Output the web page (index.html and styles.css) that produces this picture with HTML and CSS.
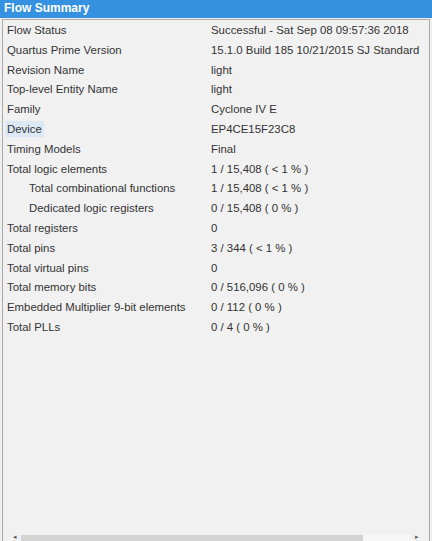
FILE: index.html
```html
<!DOCTYPE html>
<html lang="en">
  <head>
    <meta charset="UTF-8" />
    <title>Flow Summary</title>
    <link rel="stylesheet" href="styles.css">
  </head>
  <body>
    <div class="title">Flow Summary</div>
    <div class="panel">
      <div class="rows">
        <div class="row"><span class="lbl">Flow Status</span><span>Successful - Sat Sep 08 09:57:36 2018</span></div>
        <div class="row"><span class="lbl">Quartus Prime Version</span><span>15.1.0 Build 185 10/21/2015 SJ Standard</span></div>
        <div class="row"><span class="lbl">Revision Name</span><span>light</span></div>
        <div class="row"><span class="lbl">Top-level Entity Name</span><span>light</span></div>
        <div class="row"><span class="lbl">Family</span><span>Cyclone IV E</span></div>
        <div class="row"><span class="lbl"><span class="sel">Device</span></span><span>EP4CE15F23C8</span></div>
        <div class="row"><span class="lbl">Timing Models</span><span>Final</span></div>
        <div class="row"><span class="lbl">Total logic elements</span><span>1 / 15,408 ( &lt; 1 % )</span></div>
        <div class="row"><span class="lbl sub">Total combinational functions</span><span>1 / 15,408 ( &lt; 1 % )</span></div>
        <div class="row"><span class="lbl sub">Dedicated logic registers</span><span>0 / 15,408 ( 0 % )</span></div>
        <div class="row"><span class="lbl">Total registers</span><span>0</span></div>
        <div class="row"><span class="lbl">Total pins</span><span>3 / 344 ( &lt; 1 % )</span></div>
        <div class="row"><span class="lbl">Total virtual pins</span><span>0</span></div>
        <div class="row"><span class="lbl">Total memory bits</span><span>0 / 516,096 ( 0 % )</span></div>
        <div class="row"><span class="lbl">Embedded Multiplier 9-bit elements</span><span>0 / 112 ( 0 % )</span></div>
        <div class="row"><span class="lbl">Total PLLs</span><span>0 / 4 ( 0 % )</span></div>
      </div>
      <div class="hscroll">
        <span class="arrow">&#9666;</span>
        <div class="track"><div class="thumb"></div></div>
        <span class="arrow">&#9656;</span>
      </div>
    </div>
  </body>
</html>
```

FILE: styles.css
```css
html, body {
  margin: 0;
  height: 100%;
}
body {
  width: 432px;
  height: 541px;
  background: #f0f0f0;
  font-family: "Liberation Sans", Arial, sans-serif;
  font-size: 11.4px;
  color: #333;
  display: flex;
  flex-direction: column;
  overflow: hidden;
}
.title {
  height: 18px;
  line-height: 17px;
  background: #3592e0;
  color: #fff;
  font-weight: bold;
  font-size: 12px;
  padding-left: 4px;
}
.panel {
  flex: 1;
  margin: 1px 2px 0 2px;
  border: 1px solid #a9a9a9;
  border-bottom: none;
  background: #f1f1f1;
  display: flex;
  flex-direction: column;
}
.rows {
  flex: 1;
  padding-top: 1px;
}
.row {
  display: flex;
  height: 19.8px;
  line-height: 19.8px;
  white-space: nowrap;
}
.lbl {
  width: 204px;
  padding-left: 4px;
  flex-shrink: 0;
}
.lbl.sub {
  width: 182px;
  padding-left: 26px;
}
.sel {
  background: #dce9f5;
  padding: 2px 2px;
  margin-left: -2px;
}
.hscroll {
  height: 9px;
  display: flex;
  align-items: flex-end;
  padding: 0 6px 0 6px;
}
.arrow {
  width: 12px;
  font-size: 7px;
  line-height: 8px;
  color: #606060;
  text-align: center;
}
.track {
  flex: 1;
  height: 6px;
  background: #f6f6f6;
  display: flex;
}
.thumb {
  width: 342px;
  background: #d4d4d4;
}
```
